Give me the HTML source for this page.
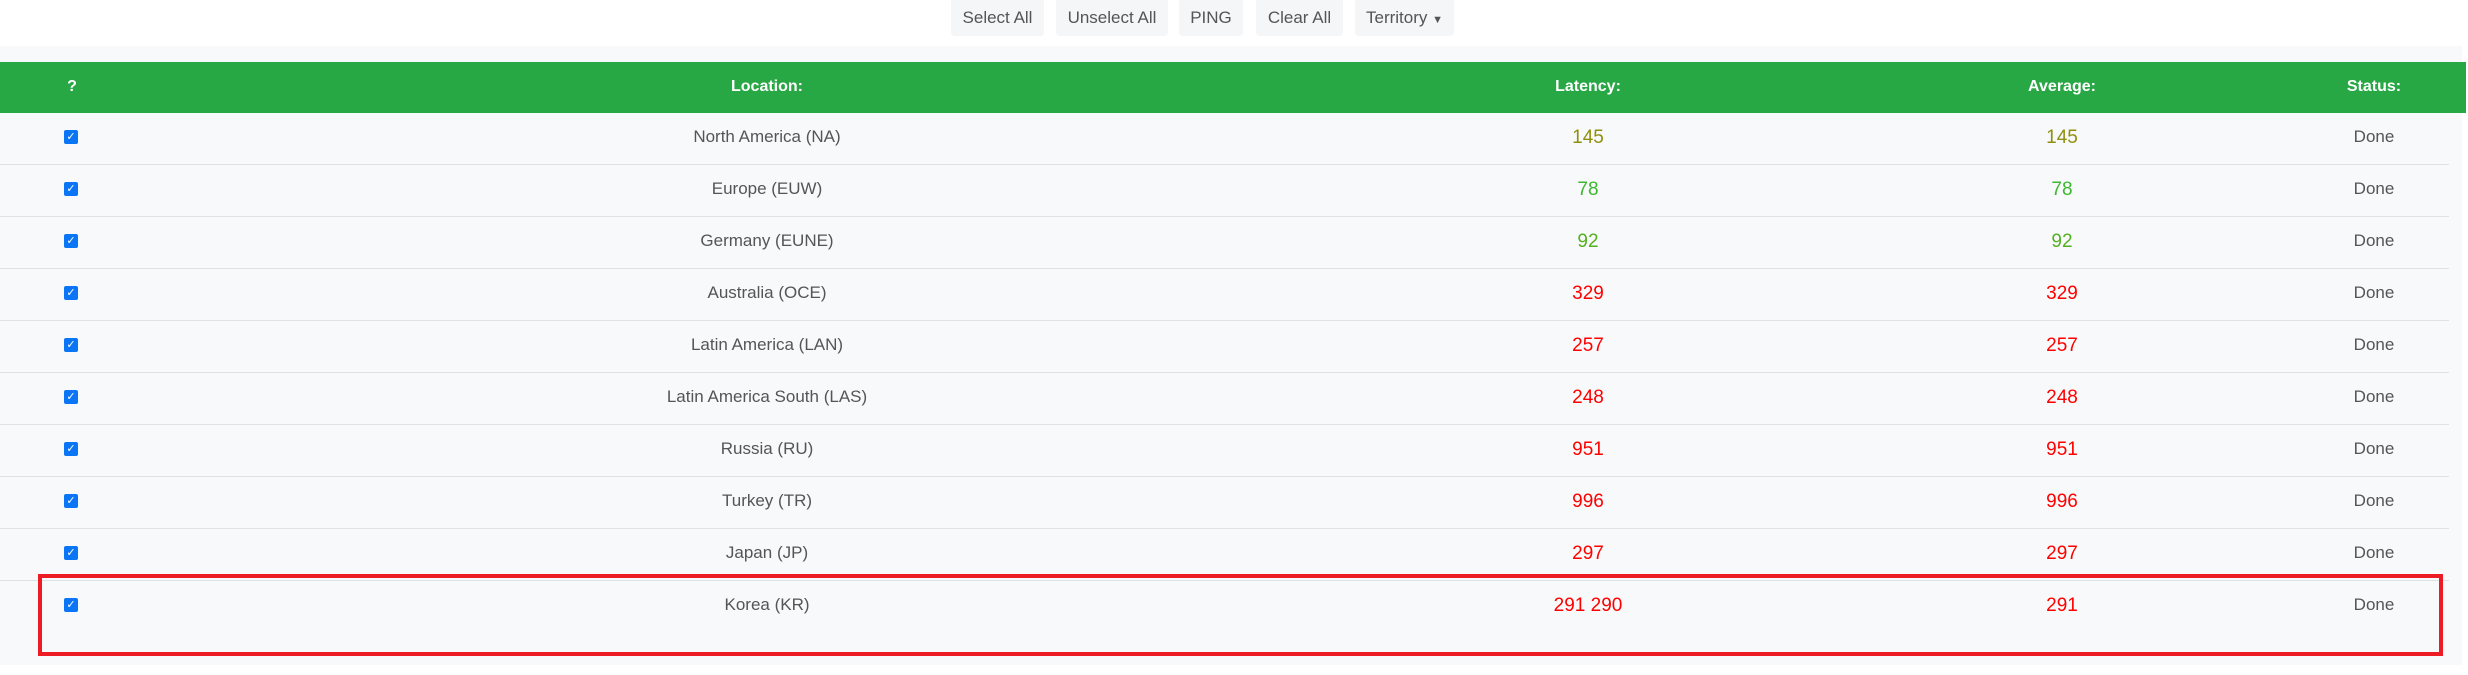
<!DOCTYPE html>
<html><head><meta charset="utf-8"><style>
*{margin:0;padding:0;box-sizing:border-box}
body{width:2468px;height:675px;background:#fff;font-family:"Liberation Sans Narrow","Liberation Sans",sans-serif;color:#555;position:relative;overflow:hidden}
.btn{position:absolute;top:0;height:36px;background:#f5f6f7;border-radius:0 0 4px 4px;font-size:17px;line-height:36px;text-align:center;color:#555}
.panel{position:absolute;left:0;top:46px;width:2462px;height:619px;background:#f8f9fa}
.hdr{position:absolute;left:0;top:62px;width:2466px;height:51px;background:#28a745}
.c{position:absolute;transform:translateX(-50%);white-space:nowrap}
.h{color:#fff;font-weight:bold;font-size:16px;top:16px}
.row{position:absolute;left:0;width:2449px;height:52px;border-bottom:1.5px solid #dee2e6}
.cb{position:absolute;left:64px;top:17px;width:14px;height:14px;background:#0b76f5;border-radius:2px;color:#fff;font-size:11px;line-height:14px;text-align:center;font-family:"DejaVu Sans",sans-serif}
.loc{top:14px;font-size:17px;color:#555}
.num{top:14px;font-size:19px}
.st{top:14px;font-size:17px;color:#555}
.red{position:absolute;left:38px;top:574px;width:2405px;height:82px;border:4px solid #ed1c24}
</style></head><body>
<div class="btn" style="left:951px;width:93px">Select All</div>
<div class="btn" style="left:1056px;width:112px">Unselect All</div>
<div class="btn" style="left:1179px;width:64px">PING</div>
<div class="btn" style="left:1256px;width:87px">Clear All</div>
<div class="btn" style="left:1355px;width:99px">Territory <span style="font-size:11px">▼</span></div>
<div class="panel"></div>
<div class="hdr">
<div class="c h" style="left:72px">?</div>
<div class="c h" style="left:767px">Location:</div>
<div class="c h" style="left:1588px">Latency:</div>
<div class="c h" style="left:2062px">Average:</div>
<div class="c h" style="left:2374px">Status:</div>
</div>
<div class="row" style="top:113px"><div class="cb">✓</div><div class="c loc" style="left:767px">North America (NA)</div><div class="c num" style="left:1588px;color:#8f8f10">145</div><div class="c num" style="left:2062px;color:#8f8f10">145</div><div class="c st" style="left:2374px">Done</div></div>
<div class="row" style="top:165px"><div class="cb">✓</div><div class="c loc" style="left:767px">Europe (EUW)</div><div class="c num" style="left:1588px;color:#3cb830">78</div><div class="c num" style="left:2062px;color:#3cb830">78</div><div class="c st" style="left:2374px">Done</div></div>
<div class="row" style="top:217px"><div class="cb">✓</div><div class="c loc" style="left:767px">Germany (EUNE)</div><div class="c num" style="left:1588px;color:#55b020">92</div><div class="c num" style="left:2062px;color:#55b020">92</div><div class="c st" style="left:2374px">Done</div></div>
<div class="row" style="top:269px"><div class="cb">✓</div><div class="c loc" style="left:767px">Australia (OCE)</div><div class="c num" style="left:1588px;color:#f00">329</div><div class="c num" style="left:2062px;color:#f00">329</div><div class="c st" style="left:2374px">Done</div></div>
<div class="row" style="top:321px"><div class="cb">✓</div><div class="c loc" style="left:767px">Latin America (LAN)</div><div class="c num" style="left:1588px;color:#f00">257</div><div class="c num" style="left:2062px;color:#f00">257</div><div class="c st" style="left:2374px">Done</div></div>
<div class="row" style="top:373px"><div class="cb">✓</div><div class="c loc" style="left:767px">Latin America South (LAS)</div><div class="c num" style="left:1588px;color:#f00">248</div><div class="c num" style="left:2062px;color:#f00">248</div><div class="c st" style="left:2374px">Done</div></div>
<div class="row" style="top:425px"><div class="cb">✓</div><div class="c loc" style="left:767px">Russia (RU)</div><div class="c num" style="left:1588px;color:#f00">951</div><div class="c num" style="left:2062px;color:#f00">951</div><div class="c st" style="left:2374px">Done</div></div>
<div class="row" style="top:477px"><div class="cb">✓</div><div class="c loc" style="left:767px">Turkey (TR)</div><div class="c num" style="left:1588px;color:#f00">996</div><div class="c num" style="left:2062px;color:#f00">996</div><div class="c st" style="left:2374px">Done</div></div>
<div class="row" style="top:529px"><div class="cb">✓</div><div class="c loc" style="left:767px">Japan (JP)</div><div class="c num" style="left:1588px;color:#f00">297</div><div class="c num" style="left:2062px;color:#f00">297</div><div class="c st" style="left:2374px">Done</div></div>
<div class="row" style="top:581px;height:80px;border-bottom:none"><div class="cb">✓</div><div class="c loc" style="left:767px">Korea (KR)</div><div class="c num" style="left:1588px;color:#f00">291 290</div><div class="c num" style="left:2062px;color:#f00">291</div><div class="c st" style="left:2374px">Done</div></div>
<div class="red"></div>
</body></html>
